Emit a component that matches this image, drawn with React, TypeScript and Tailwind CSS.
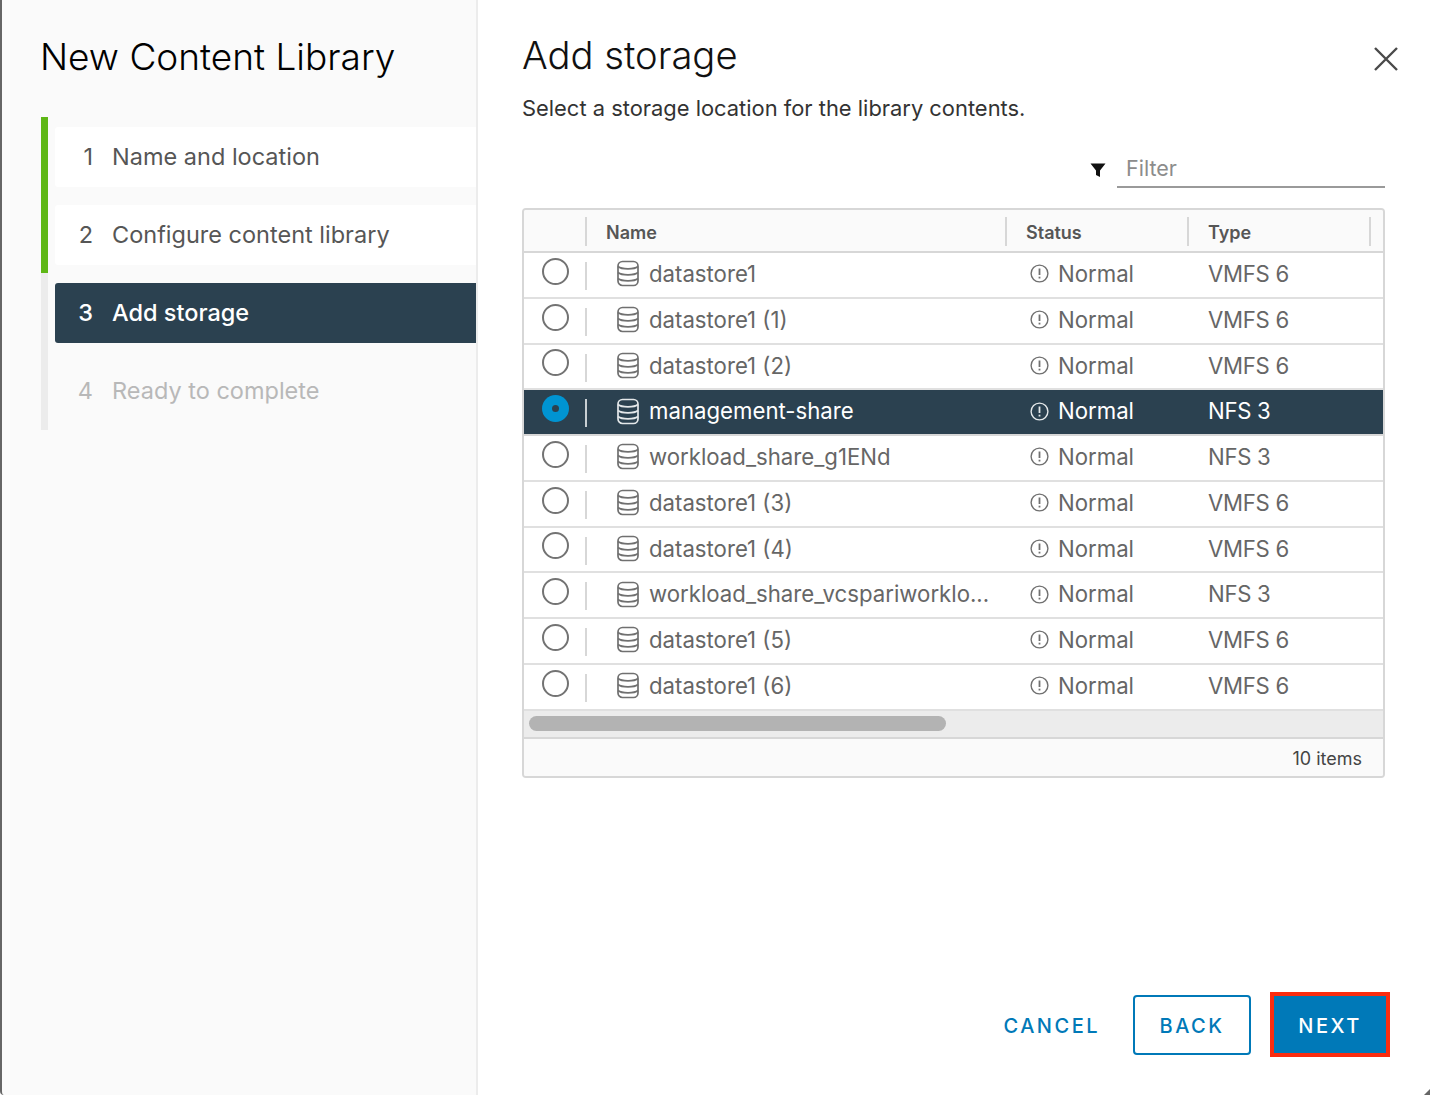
const font = "[font-family:Inter,'Liberation_Sans',sans-serif]";

const steps = [
  { n: 1, label: "Name and location", state: "done" },
  { n: 2, label: "Configure content library", state: "done" },
  { n: 3, label: "Add storage", state: "active" },
  { n: 4, label: "Ready to complete", state: "todo" },
];

const rows = [
  { name: "datastore1", type: "VMFS 6" },
  { name: "datastore1 (1)", type: "VMFS 6" },
  { name: "datastore1 (2)", type: "VMFS 6" },
  { name: "management-share", type: "NFS 3", selected: true },
  { name: "workload_share_g1ENd", type: "NFS 3" },
  { name: "datastore1 (3)", type: "VMFS 6" },
  { name: "datastore1 (4)", type: "VMFS 6" },
  { name: "workload_share_vcspariworklo...", type: "NFS 3" },
  { name: "datastore1 (5)", type: "VMFS 6" },
  { name: "datastore1 (6)", type: "VMFS 6" },
];

const DbIcon = ({ color }: { color: string }) => (
  <svg width="24" height="27" viewBox="0 0 24 27" fill="none" stroke={color} strokeWidth="1.700" className="shrink-0">
    <rect x="2" y="1.500" width="20" height="24" rx="4.500" />
    <path d="M2 6.500c2 1.700 5.500 2.300 10 2.300s8-.6 10-2.300" />
    <path d="M2 12.500c2 1.700 5.500 2.300 10 2.300s8-.6 10-2.300" />
    <path d="M2 18.500c2 1.700 5.500 2.300 10 2.300s8-.6 10-2.300" />
  </svg>
);

const StatusIcon = ({ color }: { color: string }) => (
  <svg width="19" height="19" viewBox="0 0 19 19" fill="none" stroke={color} strokeWidth="1.400" className="shrink-0">
    <circle cx="9.500" cy="9.500" r="8.400" />
    <path d="M9.500 4.500v6.500" strokeWidth="1.800" />
    <path d="M9.500 12.700v1.800" strokeWidth="1.800" />
  </svg>
);

const Radio = ({ selected }: { selected?: boolean }) =>
  selected ? (
    <span className="mb-[7px] flex h-[27px] w-[27px] items-center justify-center rounded-full bg-[#0094d2]">
      <span className="h-[7px] w-[7px] rounded-full bg-[#2b4150]" />
    </span>
  ) : (
    <span className="mb-[7px] h-[27px] w-[27px] rounded-full border-2 border-[#737373] bg-white" />
  );

export default function App() {
  return (
    <div className={`relative flex h-[1100px] w-[1430px] items-start overflow-hidden bg-white ${font}`}>
      <aside className="h-[1095px] w-[478px] shrink-0 rounded-bl-[4px] border-r-2 border-l-2 border-r-[#ececec] border-l-[#666] bg-[#fafafa] pt-[34px] pl-[38px]">
        <h1 className="text-[37px] leading-[46px] font-light text-black">New Content Library</h1>
        <div className="mt-[37px] ml-[1px] flex">
          <div className="flex h-[313px] w-[7px] flex-col">
            <div className="h-[156px] bg-[#5eb715]" />
            <div className="flex-1 bg-[#ececec]" />
          </div>
          <ul className="flex flex-1 flex-col gap-[18px] pt-[10px]">
            {steps.map((s) => (
              <li
                key={s.n}
                className={`ml-[7px] flex h-[60px] items-center rounded-l-[3px] text-[23.500px] ${
                  s.state === "done"
                    ? "bg-white text-[#565656]"
                    : s.state === "active"
                      ? "bg-[#2b4150] font-medium text-white"
                      : "text-[#b8b8b8]"
                }`}
              >
                <span className="w-[57px] pr-[19px] text-right">{s.n}</span>
                <span>{s.label}</span>
              </li>
            ))}
          </ul>
        </div>
      </aside>

      <main className="flex flex-1 flex-col pt-[32px] pr-[45px] pl-[44px]">
        <div className="flex items-start justify-between">
          <h2 className="text-[38.200px] leading-[46px] font-light text-[#111]">Add storage</h2>
          <button className="mt-[14px] mr-[-14px] text-[#4a4a4a]">
            <svg width="26" height="26" viewBox="0 0 26 26" stroke="currentColor" strokeWidth="2.400" fill="none">
              <path d="M2 2l22 22M24 2L2 24" />
            </svg>
          </button>
        </div>
        <p className="mt-[15px] text-[21.900px] leading-[30px] text-[#333]">
          Select a storage location for the library contents.
        </p>

        <div className="mt-[25px] flex items-center justify-end">
          <svg width="16" height="16" viewBox="0 0 16 16" fill="#111" className="mt-[3px] mr-[11px]">
            <path d="M0.500 1.500h15L10 8.500V15l-4-2V8.500z" />
          </svg>
          <div className="h-[40px] w-[268px] border-b-2 border-[#9a9a9a] pl-[9px] text-[21.500px] leading-[40px] text-[#8c8c8c]">
            Filter
          </div>
        </div>

        <div className="mt-[20px] h-[570px] overflow-hidden rounded-[4px] border-2 border-[#d7d7d7] bg-white">
          <div className="grid h-[43px] grid-cols-[63px_420px_182px_194px] border-b-2 border-[#d7d7d7] bg-[#fafafa] text-[18px] font-semibold text-[#565656]">
            <div className="my-[7px] border-r-2 border-[#d7d7d7]" />
            <div className="my-[7px] flex items-center border-r-2 border-[#d7d7d7] pt-[2px] pl-[19px]">Name</div>
            <div className="my-[7px] flex items-center border-r-2 border-[#d7d7d7] pt-[2px] pl-[19px]">Status</div>
            <div className="my-[7px] mr-[12px] flex items-center border-r-2 border-[#d7d7d7] pt-[2px] pl-[19px]">Type</div>
          </div>

          {rows.map((r) => {
            const text = r.selected ? "text-white" : "text-[#666]";
            const iconColor = r.selected ? "#e4e8ea" : "#707070";
            return (
              <div
                key={r.name}
                className={`grid h-[45.750px] grid-cols-[63px_420px_182px_194px] border-b-2 text-[22.200px] ${
                  r.selected ? "border-[#d7d7d7] bg-[#2b4150]" : "border-[#e0e0e0] bg-white"
                } ${text}`}
              >
                <div className="flex items-center justify-center">
                  <Radio selected={r.selected} />
                </div>
                <div className="relative flex items-center pb-[2px] pl-[29px]">
                  <span
                    className={`absolute top-[9px] left-[-2px] h-[28px] w-[2px] ${
                      r.selected ? "bg-[#c8cfd3]" : "bg-[#d7d7d7]"
                    }`}
                  />
                  <DbIcon color={iconColor} />
                  <span className="ml-[9px] whitespace-nowrap">{r.name}</span>
                </div>
                <div className="flex items-center pb-[2px] pl-[23px]">
                  <StatusIcon color={iconColor} />
                  <span className="ml-[9px]">Normal</span>
                </div>
                <div className="flex items-center pb-[2px] pl-[19px] tracking-[-0.300px]">{r.type}</div>
              </div>
            );
          })}

          <div className="flex h-[28px] items-center border-b-2 border-[#d7d7d7] bg-[#ececec] pl-[5px]">
            <div className="h-[15px] w-[417px] rounded-full bg-[#b3b3b3]" />
          </div>
          <div className="flex h-[40px] items-center justify-end bg-[#fafafa] pr-[21px] text-[18px] text-[#444]">
            10 items
          </div>
        </div>

        <div className="mt-[214px] flex items-center justify-end gap-[19px] text-[20px] font-medium tracking-[2.500px]">
          <button className="mr-[14px] pt-[3px] pb-0 text-[#0079b8]">CANCEL</button>
          <button className="h-[60px] w-[118px] rounded-[4px] border-2 border-[#0079b8] bg-white pt-[3px] text-[#0079b8]">
            BACK
          </button>
          <button className="mr-[-5px] h-[65px] w-[120px] border-4 border-[#fb2c0f] bg-[#0079b8] pt-[3px] text-white">
            NEXT
          </button>
        </div>
      </main>

      <svg width="6" height="6" viewBox="0 0 6 6" fill="#666" className="absolute top-[1089px] right-0">
        <path d="M6 0v6H0z" />
      </svg>
    </div>
  );
}
